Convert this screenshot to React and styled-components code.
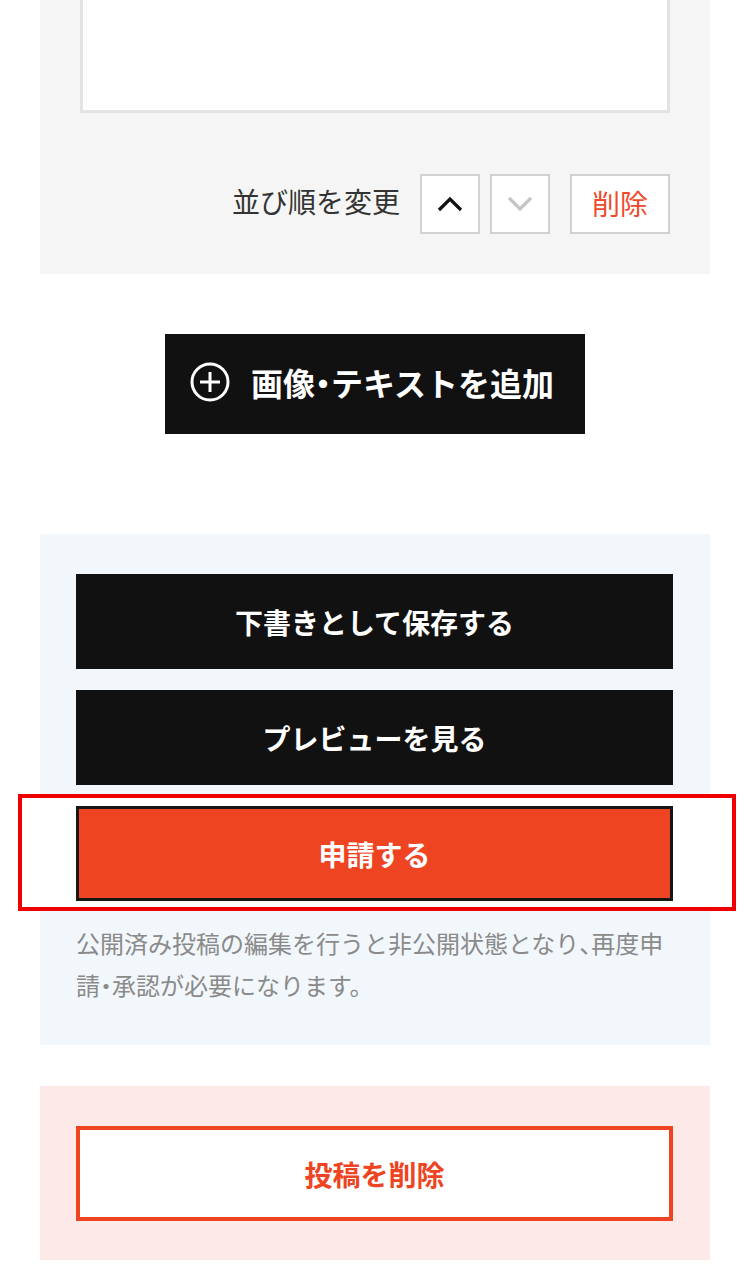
import React from 'react';
import styled, {createGlobalStyle} from 'styled-components';

const GlobalStyle = createGlobalStyle`
	body {
		margin: 0;
		background: #fff;
		font-family: "Noto Sans CJK JP", "Noto Sans", sans-serif;
	}
`;

const Page = styled.div`
	width: 670px;
	margin: 0 40px;
	padding-bottom: 15px;
`;

// punctuation set half-width, as the reference renders it
const Half = styled.span`
	font-feature-settings: "halt";
`;

const ItemPanel = styled.section`
	background: #f5f5f5;
	padding: 0 40px 40px;
`;

const ItemBox = styled.div`
	height: 110px;
	background: #fff;
	border: 3px solid #e3e3e3;
	border-top: none;
`;

const OrderRow = styled.div`
	display: flex;
	align-items: center;
	justify-content: flex-end;
	height: 60px;
	margin-top: 61px;
`;

const OrderLabel = styled.span`
	font-size: 28px;
	color: #333;
	margin-right: 20px;
	line-height: 1;
	padding-bottom: 6px;
`;

const ArrowButton = styled.button`
	width: 60px;
	height: 60px;
	padding: 0;
	margin-left: ${p => (p.$first ? 0 : 10)}px;
	border: 2px solid #d2d2d2;
	background: #fff;
	display: flex;
	align-items: center;
	justify-content: center;
	color: ${p => (p.$disabled ? '#c4c4c4' : '#111')};
`;

const SmallDelete = styled.button`
	width: 100px;
	height: 60px;
	margin-left: 20px;
	border: 2px solid #d2d2d2;
	background: #fff;
	color: #ee4a2c;
	font-family: inherit;
	font-size: 28px;
	line-height: 1;
	padding: 0 0 2px;
`;

const AddWrap = styled.div`
	display: flex;
	justify-content: center;
	padding: 60px 0 100px;
`;

const AddButton = styled.button`
	width: 420px;
	height: 100px;
	background: #111;
	color: #fff;
	border: none;
	display: flex;
	align-items: center;
	justify-content: center;
	gap: 21px;
	font-family: inherit;
	font-weight: 700;
	font-size: 32px;
	line-height: 1;
	padding: 0 6px 4px 0;
`;

const ActionPanel = styled.section`
	background: #f2f7fb;
	padding: 40px 37px 39px 36px;
	display: flex;
	flex-direction: column;
	gap: 21px;
`;

const BigButton = styled.button`
	width: 100%;
	height: 95px;
	box-sizing: border-box;
	font-family: inherit;
	font-weight: 700;
	font-size: 28px;
	display: flex;
	align-items: center;
	justify-content: center;
	padding: 0;
	background: ${p => (p.$variant === 'apply' ? '#ee4422' : p.$variant === 'danger' ? '#fff' : '#111')};
	color: ${p => (p.$variant === 'danger' ? '#ee4422' : '#fff')};
	border: ${p =>
		p.$variant === 'apply' ? '3px solid #161616' : p.$variant === 'danger' ? '4px solid #ee4422' : 'none'};
	position: relative;
	z-index: 1;
`;

const Highlight = styled.div`
	position: relative;
	&::before {
		content: '';
		position: absolute;
		top: -12px;
		bottom: -10px;
		left: -58px;
		right: -63px;
		background: #fff;
		border: 4px solid #ee0000;
	}
`;

const Note = styled.p`
	margin: 0;
	font-size: 24px;
	line-height: 42px;
	color: #8a8a8a;
`;

const DangerPanel = styled.section`
	background: #fde9e7;
	margin-top: 41px;
	padding: 40px 37px 39px 36px;
`;

const Chevron = ({dir}) => (
	<svg width="28" height="16" viewBox="0 0 28 16" fill="none">
		<path
			d={dir === 'up' ? 'M3 14 L14 3 L25 14' : 'M3 2 L14 13 L25 2'}
			stroke="currentColor"
			strokeWidth="3.2"
		/>
	</svg>
);

const PlusCircle = () => (
	<svg width="40" height="40" viewBox="0 0 40 40" fill="none">
		<circle cx="20" cy="20" r="18" stroke="#fff" strokeWidth="3" />
		<path d="M20 10 V30 M10 20 H30" stroke="#fff" strokeWidth="3" />
	</svg>
);

export default () => {
	return (
		<>
			<GlobalStyle />
			<Page>
				<ItemPanel>
					<ItemBox />
					<OrderRow>
						<OrderLabel>並び順を変更</OrderLabel>
						<ArrowButton $first>
							<Chevron dir="up" />
						</ArrowButton>
						<ArrowButton $disabled>
							<Chevron dir="down" />
						</ArrowButton>
						<SmallDelete>削除</SmallDelete>
					</OrderRow>
				</ItemPanel>
				<AddWrap>
					<AddButton>
						<PlusCircle />
						<span>
							画像<Half>・</Half>テキストを追加
						</span>
					</AddButton>
				</AddWrap>
				<ActionPanel>
					<BigButton>下書きとして保存する</BigButton>
					<BigButton>プレビューを見る</BigButton>
					<Highlight>
						<BigButton $variant="apply">申請する</BigButton>
					</Highlight>
					<Note>
						公開済み投稿の編集を行うと非公開状態となり<Half>、</Half>再度申請<Half>・</Half>承認が必要になります。
					</Note>
				</ActionPanel>
				<DangerPanel>
					<BigButton $variant="danger">投稿を削除</BigButton>
				</DangerPanel>
			</Page>
		</>
	);
};
